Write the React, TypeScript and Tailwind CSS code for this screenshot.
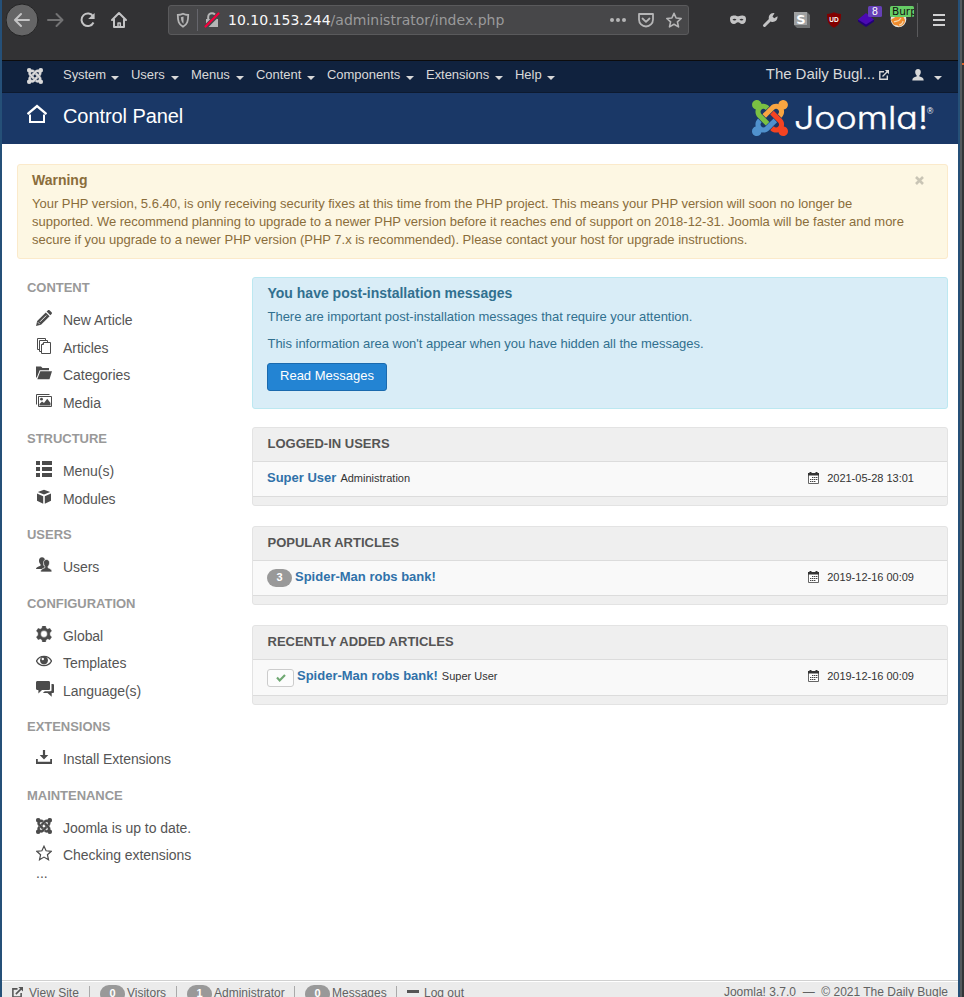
import React from "react";

type Kids = { children?: React.ReactNode };

const joomlaArms = [
  ["#7ac143", "M.6 92.1C.6 58.8 27.4 32 60.4 32c30 0 54.5 21.9 59.2 50.2 32.6-7.6 67.1.6 96.5 30l-44.3 44.3c-20.5-20.5-42.6-16.3-55.4-3.5-14.3 14.3-14.3 37.9 0 52.2l99.5 99.5-44 44.3c-87.7-87.2-49.7-49.7-99.8-99.7-26.8-26.5-35-64.8-24.8-98.9C20.4 144.6.6 120.7.6 92.1z"],
  ["#f9a541", "M130.1 208.5l44.3 44.3c10-10 89.7-89.7 99.7-99.8 14.3-14.3 37.6-14.3 51.9 0 12.8 12.8 17 35-3.5 55.4l44 44.3c31.2-31.2 38.5-67.6 28.9-101.2 29.2-4.1 51.9-29.2 51.9-59.5 0-33.2-26.8-60.1-59.8-60.1-30.3 0-55.4 22.5-59.5 51.6-33.8-9.9-71.7-1.5-98.3 25.1-18.3 19.1-71.1 71.5-99.6 99.9z"],
  ["#f44321", "M396.4 360.7c8.2-32.7-.9-68.5-26.3-93.9-11.8-12.2 5 4.7-99.5-99.7l-44.3 44.3 99.7 99.7c14.3 14.3 14.3 37.6 0 51.9-12.8 12.8-35 17-55.4-3.5l-44 44.3c27.6 30.2 68 38.8 102.7 28 5.5 27.4 29.7 48.1 58.9 48.1 33 0 59.8-26.8 59.8-60.1 0-30.2-22.5-55-51.6-59.1z"],
  ["#5091cd", "M312.1 307.6l-44-44.3c-87 86.4-50.4 50.4-99.7 99.8-14.3 14.3-37.6 14.3-51.9 0-13.1-13.4-16.9-35.3 3.2-55.4l-44-44.3c-30.2 30.2-38 65.2-29.5 98.3-26.7 6-46.2 29.9-46.2 58.2C0 453.2 26.8 480 59.8 480c28.6 0 52.5-19.8 58.6-46.7 32.7 8.2 68.5-.6 94.2-26 32.1-32 12.2-12.4 99.5-99.7z"],
];

function JoomlaMark({ size, color }: { size: number; color?: string }) {
  return (
    <svg width={size} height={size} viewBox="0 32 448 448" className="block shrink-0">
      {joomlaArms.map(([c, d]) => (
        <path key={c} d={d} fill={color ?? c} stroke={color ?? "none"} strokeWidth="12" />
      ))}
    </svg>
  );
}

function Ico({ children, w = 16 }: Kids & { w?: number }) {
  return (
    <svg width={w} height={16} viewBox={`0 0 ${w} 16`} fill="#4b4b4b" className="block shrink-0">
      {children}
    </svg>
  );
}

const icons = {
  pencil: (
    <Ico>
      <path d="M0 16l1.200-5L9.800 2.400l3.800 3.800L5 14.800z" />
      <path d="M10.600 1.600L12 .3c.6-.5 1.300-.4 1.800.1l1.800 1.800c.5.5.5 1.200 0 1.700l-1.300 1.400z" />
      <path d="M4 11.800l6.300-6.300" stroke="#fff" strokeWidth=".9" fill="none" />
      <path d="M1.800 12.200l2 2" stroke="#fff" strokeWidth=".7" fill="none" />
    </Ico>
  ),
  copy: (
    <Ico>
      <g fill="#fff" stroke="#4b4b4b">
        <path d="M1.500 11.500v-11h8v11z" />
        <path d="M3.500 13.500v-11h8v11z" />
        <path d="M7.500 4.500h7v11h-9v-9z" />
        <path d="M5.500 6.500h2v-2" />
      </g>
    </Ico>
  ),
  folder: (
    <Ico>
      <path d="M0 1.500h5l1.500 1.500H13v2.200H3.700L.8 12.500H0z" />
      <path d="M4.300 6.200H16L13.500 14.300H1.300z" />
    </Ico>
  ),
  media: (
    <Ico>
      <path d="M.5 11.500v-10h13" fill="none" stroke="#4b4b4b" />
      <path d="M2.500 3.500h13v10h-13z" fill="#fff" stroke="#4b4b4b" />
      <circle cx="5.500" cy="6.200" r="1.400" />
      <path d="M3.500 12.500V11l2.500-2.500 2 1.500 3.200-4.300 3.300 4.300v2.500z" />
    </Ico>
  ),
  list: (
    <Ico>
      <path d="M0 0h4v4H0zM6 0h10v4H6zM0 6h4v4H0zM6 6h10v4H6zM0 12h4v4H0zM6 12h10v4H6z" />
    </Ico>
  ),
  cube: (
    <Ico>
      <path d="M8 .8l6.200 2.300L8 5.600 1.800 3.100zM1 4.500l6.200 2.700v7.600L1 11.800zM15 4.500L8.800 7.200v7.600l6.200-3z" />
    </Ico>
  ),
  users: (
    <Ico>
      <path d="M6 .3c2 0 3 1.400 3 3.200 0 1.700-.5 2.800-1.400 3.700v1.400l4 1.800v1.600H0c0-1.600 1.600-2.200 4.500-3.200V7.300C3.600 6.500 3 5.300 3 3.500 3 1.700 4 .3 6 .3z" />
      <path d="M10.500 2.500c2 0 3 1.400 3 3.200 0 1.700-.6 2.700-1.400 3.600v1.500c2.400.8 3.900 1.600 3.900 4.200H4.500c.1-2.500 1.700-3.400 4.300-4.200V9.400c-.8-.8-1.300-2-1.300-3.700 0-1.800 1-3.200 3-3.200z" stroke="#fff" strokeWidth=".7" />
    </Ico>
  ),
  gear: (
    <Ico>
      <path fillRule="evenodd" stroke="#4b4b4b" strokeWidth=".5" d="M6.500 0h3l.5 2.200 1.700 1 2.200-.8 1.600 2.700-1.700 1.600v2.600l1.700 1.600-1.600 2.700-2.200-.8-1.700 1-.5 2.200h-3L6 13.800l-1.700-1-2.200.8L.5 10.900l1.700-1.600V6.700L.5 5.100l1.600-2.700 2.200.8 1.700-1zM8 4.600a3.400 3.400 0 100 6.800 3.400 3.400 0 000-6.800z" />
    </Ico>
  ),
  eye: (
    <Ico>
      <path d="M.5 8C3.500 1.700 12.500 1.700 15.500 8 12.500 14 3.500 14 .5 8z" fill="#fff" stroke="#4b4b4b" strokeWidth="1.300" />
      <circle cx="8" cy="7.300" r="3.900" />
      <circle cx="6.800" cy="6" r="1.200" fill="#fff" />
    </Ico>
  ),
  comments: (
    <Ico w={18}>
      <path d="M1.500 0h11C13.500 0 14 .6 14 1.500v6c0 1-.5 1.500-1.500 1.500H6l-3.600 3.500V9h-.9C.5 9 0 8.400 0 7.500v-6C0 .6.5 0 1.500 0z" />
      <path d="M15.500 3h1.200c.9 0 1.300.5 1.300 1.300v6.400c0 .9-.4 1.300-1.300 1.300h-1v3.800L11.500 12H6.800l2-1.800h5.500c.8 0 1.200-.4 1.200-1.200z" />
    </Ico>
  ),
  download: (
    <Ico>
      <path d="M6.900 1h2.200v5h3.200L8 10.600 3.700 6h3.200zM0 10h1.800v2.800h12.400V10H16v5H0z" />
    </Ico>
  ),
  joomla: <JoomlaMark size={16} color="#4b4b4b" />,
  star: (
    <Ico>
      <path d="M8 1.200l2.100 4.600 5.100.5-3.800 3.400 1.100 5L8 12.100l-4.500 2.600 1.100-5L.8 6.300l5.100-.5z" fill="none" stroke="#4b4b4b" strokeWidth="1.200" />
    </Ico>
  ),
};

const groups: { title: string; items: [React.ReactNode, string][] }[] = [
  { title: "CONTENT", items: [[icons.pencil, "New Article"], [icons.copy, "Articles"], [icons.folder, "Categories"], [icons.media, "Media"]] },
  { title: "STRUCTURE", items: [[icons.list, "Menu(s)"], [icons.cube, "Modules"]] },
  { title: "USERS", items: [[icons.users, "Users"]] },
  { title: "CONFIGURATION", items: [[icons.gear, "Global"], [icons.eye, "Templates"], [icons.comments, "Language(s)"]] },
  { title: "EXTENSIONS", items: [[icons.download, "Install Extensions"]] },
  { title: "MAINTENANCE", items: [[icons.joomla, "Joomla is up to date."], [icons.star, "Checking extensions"]] },
];

function Caret() {
  return <span className="mt-[2px] h-0 w-0 border-x-4 border-t-4 border-x-transparent border-t-[#d9d9d9]" />;
}

function External({ color, size = 10 }: { color: string; size?: number }) {
  return (
    <svg width={size} height={size} viewBox="0 0 10 10" fill="none" stroke={color} strokeWidth="1.400" className="block shrink-0">
      <path d="M5 1.700H.8v7.500h7.500V5.500M3.500 6.500L8.500 1.500" />
      <path d="M5.800 0H10v4.200z" fill={color} stroke="none" />
    </svg>
  );
}

function BrowserBar() {
  return (
    <div className="flex h-[61px] items-start border-b border-[#0c0c0d] bg-[#323234] pl-1">
      <svg width="162" height="40" viewBox="6 0 162 40" fill="none" stroke="#c4c4c5" strokeWidth="2" strokeLinecap="round" strokeLinejoin="round" className="block shrink-0">
        <circle cx="22" cy="20" r="16" fill="#656566" stroke="#242425" strokeWidth="1" />
        <path d="M29 20H15.500M21 14l-6 6 6 6" />
        <path d="M48 20h14M56.500 14l6 6-6 6" stroke="#727273" />
        <path d="M93.200 16.500a6.300 6.300 0 10.300 6" strokeLinecap="butt" />
        <path d="M94.600 13v6h-6.500z" fill="#c4c4c5" stroke="none" />
        <path d="M112 20l7-7 7 7M114 19.500V27h10v-7.500" />
        <path d="M118 27v-4h2.300v4" strokeWidth="1.500" />
      </svg>
      <div className="mt-[5px] flex h-[30px] w-[521px] shrink-0 items-center rounded-[3px] border border-[#5a5a5c] bg-[#474749]">
        <svg width="55" height="28" viewBox="169 6 55 28" fill="none" className="block shrink-0">
          <path d="M183 13.800c1.800.9 3.400 1.200 5.200 1.200 0 6-.8 9.500-5.200 11.700-4.400-2.200-5.200-5.700-5.200-11.700 1.800 0 3.400-.3 5.200-1.200z" stroke="#b5b5b6" strokeWidth="1.800" />
          <path d="M183.500 16.500v7.200c-1.900-1.500-2.500-3.500-2.600-6.400z" fill="#b5b5b6" />
          <path d="M197.500 9v22" stroke="#66666c" />
          <path d="M206 19h12v8h-12z" fill="#b5b5b6" />
          <path d="M208.200 19v-2a3.800 3.800 0 017.600 0v2" stroke="#b5b5b6" strokeWidth="2" />
          <path d="M205 27.500l14-14" stroke="#474749" strokeWidth="4.500" />
          <path d="M205.500 26.500l13-13" stroke="#f5003d" strokeWidth="2.200" strokeLinecap="round" />
        </svg>
        <div className="ml-[4px] whitespace-nowrap font-['DejaVu_Sans',sans-serif] text-[14px] leading-none tracking-[0.01px] text-[#f9f9fa]">
          10.10.153.244<span className="text-[#9a9a9b]">/administrator/index.php</span>
        </div>
        <svg width="82" height="28" viewBox="606 6 82 28" fill="none" stroke="#b5b5b6" strokeWidth="1.800" strokeLinejoin="round" strokeLinecap="round" className="ml-auto block shrink-0">
          <g fill="#b5b5b6" stroke="none">
            <circle cx="612" cy="20" r="2" />
            <circle cx="618" cy="20" r="2" />
            <circle cx="624" cy="20" r="2" />
          </g>
          <path d="M639 14h14v5.500a7 7 0 01-14 0zM642.500 18.500l3.500 3.300 3.500-3.300" />
          <path d="M674 13.300l2.100 4.700 5.100.5-3.800 3.400 1.100 5-4.500-2.600-4.500 2.600 1.100-5-3.800-3.400 5.100-.5z" strokeWidth="1.600" />
        </svg>
      </div>
      <svg width="269" height="44" viewBox="689 0 269 44" className="block shrink-0">
        <path fillRule="evenodd" fill="#c4c4c5" d="M730 19c0-3 2-3.500 4-3.500 2.500 0 3 .8 4 .8s1.500-.8 4-.8c2 0 4 .5 4 3.500 0 3.500-1.500 5-4 5-2 0-2.500-1.700-4-1.700s-2 1.700-4 1.700c-2.500 0-4-1.500-4-5zm2.500.7c1 1 3 1 4 0-1-1.200-3-1.200-4 0zm7 0c1 1 3 1 4 0-1-1.200-3-1.200-4 0z" />
        <path d="M764.500 25.500l6.500-6.500" stroke="#c4c4c5" strokeWidth="3" strokeLinecap="round" />
        <path d="M769 19.500c-1-3.500 1.500-7 5.500-6.300l-2 3.200 1.700 1.800 3.300-1.900c.5 4-3 6.500-6.300 5.500z" fill="#c4c4c5" />
        <path d="M807 12l3 3v13h-13l-3-3z" fill="#6d6f70" />
        <path d="M794 12h13v13h-13z" fill="#a0a2a3" />
        <text x="801" y="23.500" textAnchor="middle" fill="#fff" fontSize="13" className="font-['DejaVu_Sans',sans-serif] font-bold">S</text>
        <path d="M834 12.300c2.500 1.300 4.500 1.700 7 1.700 0 7-1 10.500-7 13.700-6-3.200-7-6.700-7-13.700 2.500 0 4.500-.4 7-1.700z" fill="#800000" />
        <text x="834" y="22" textAnchor="middle" fill="#fff" fontSize="6.500" className="font-['Liberation_Sans',sans-serif] font-bold">UD</text>
        <path d="M858 21.500l8 5.500 8-5.500v-2h-16z" fill="#230079" />
        <path d="M858 19.500l8-6.500 8 6.500-8 5z" fill="#4b09b3" />
        <rect x="868" y="6" width="14" height="11" rx="1.500" fill="#6640b7" />
        <text x="875" y="15.300" textAnchor="middle" fill="#fff" fontSize="10.500" className="font-['Liberation_Sans',sans-serif]">8</text>
        <circle cx="898.500" cy="19.500" r="7.800" fill="#e8e2da" />
        <path d="M891 20c1-2 3-1 4-3l8-1 2 4c0 4-3 6-6 6.500-2-2-4-1-5.500-2z" fill="#ef8b2c" />
        <path d="M894 22c2-1 5 0 7-4M899 25c2 0 4-2 4-4" fill="none" stroke="#f5d6ad" strokeWidth="1.200" />
        <rect x="890" y="6" width="24" height="11" rx="1.500" fill="#66cc66" />
        <svg x="890" y="4" width="24" height="16" viewBox="890 4 24 16">
          <text x="892" y="15" fill="#111" fontSize="10.500" className="font-['DejaVu_Sans',sans-serif]">Burp</text>
        </svg>
        <path d="M917.500 3v34" stroke="#5a5a5c" />
        <path d="M933 15h12M933 20h12M933 25h12" stroke="#d0d0d1" strokeWidth="2" />
      </svg>
    </div>
  );
}

const menus = [
  ["System", "w-[56px]"],
  ["Users", "w-[48px]"],
  ["Menus", "w-[53px]"],
  ["Content", "w-[59px]"],
  ["Components", "w-[87px]"],
  ["Extensions", "w-[77px]"],
  ["Help", "w-[40px]"],
];

function AdminNav() {
  return (
    <div className="flex h-8 items-center border-b border-[#0d1a2f] bg-[#10223e] pl-[25px] text-[13px] text-[#d9d9d9]">
      <div className="mt-[-2px]">
        <JoomlaMark size={16} color="#d9d9d9" />
      </div>
      <div className="ml-5 flex gap-3">
        {menus.map(([m, w]) => (
          <div key={m} className={`flex items-center justify-between ${w}`}>
            <span className="-mt-1 tracking-[-0.04px]">{m}</span>
            <Caret />
          </div>
        ))}
      </div>
      <span className="-mt-1 ml-auto text-[15px] tracking-[-0.05px]">The Daily Bugl...</span>
      <div className="-mt-1 ml-1">
        <External color="#d9d9d9" />
      </div>
      <svg width="12" height="12" viewBox="0 0 12 12" fill="#d9d9d9" className="-mt-1 ml-[23px] block">
        <path d="M6 0c2 0 2.800 1.400 2.800 3 0 1.500-.6 2.600-1.400 3.300v1.300C10 8.300 11.700 9 11.700 11.500H.3C.3 9 2 8.300 4.600 7.600V6.300C3.800 5.600 3.200 4.500 3.200 3 3.200 1.400 4 0 6 0z" />
      </svg>
      <div className="ml-[10px] mr-4 flex">
        <Caret />
      </div>
    </div>
  );
}

function PageHeader() {
  return (
    <div className="flex h-[51px] items-start bg-[#1a3867] pl-[25px] text-white">
      <svg width="20" height="20" viewBox="0 0 20 20" fill="none" stroke="#fff" strokeWidth="2" className="mt-[11px] block">
        <path d="M.5 10L10 2l9.500 8" strokeWidth="2.300" />
        <path d="M3 10.500V18h14v-7.500" />
      </svg>
      <h1 className="ml-4 mt-[8px] text-[20px] leading-[30px] tracking-[-0.08px]">Control Panel</h1>
      <div className="ml-auto mr-[24px] mt-[7px] flex">
        <JoomlaMark size={36} />
        <svg width="146" height="36" viewBox="788 100 146 36" fill="#fff" className="block">
          <text x="794" y="129" fontSize="30.500" textLength="134" lengthAdjust="spacingAndGlyphs" stroke="#fff" strokeWidth=".4" className="font-['Inter',sans-serif] font-light [font-feature-settings:'cv11']">Joomla!</text>
          <text x="927" y="113.500" fontSize="8.500" className="font-['Liberation_Sans',sans-serif]">®</text>
        </svg>
      </div>
    </div>
  );
}

function Calendar() {
  return (
    <svg width="11" height="12" viewBox="0 0 11 12" className="block">
      <path d="M.5 1.500h10v10H.5z" fill="#fff" stroke="#666" />
      <path d="M0 1h11v2.500H0zM1.500 0h2v2h-2zM7.500 0h2v2h-2z" fill="#333" />
      <path d="M4 5.500h5.500M2 7.500h7.500M2 9.500h5.500" stroke="#444" strokeWidth="1.200" strokeDasharray="1.400 .6" />
    </svg>
  );
}

function Panel({ title, date, tall, children }: Kids & { title: string; date: string; tall?: boolean }) {
  return (
    <section className="mb-5 overflow-hidden rounded-[3px] border border-[#e3e3e3] bg-[#efefef]">
      <h2 className="h-[33px] pl-[14.500px] text-[13px] font-bold leading-[32px] text-[#555]">{title}</h2>
      <div className={`flex border-y border-[#dcdcdc] bg-[#f9f9f9] pl-[14px] pr-[33px] ${tall ? "h-[37px]" : "h-[36px]"}`}>
        <div className="flex h-[32px] items-center text-[11px] text-[#333]">{children}</div>
        <div className="ml-auto flex h-[33px] items-center text-[11px] text-[#333]">
          <div className="-mt-[2px] mr-[8.500px]">
            <Calendar />
          </div>
          {date}
        </div>
      </div>
      <div className="h-[8px]" />
    </section>
  );
}

function ItemLink({ children }: Kids) {
  return <a className="-mt-px mr-1 text-[13px] font-bold text-[#3071a9]">{children}</a>;
}

function Count({ children }: Kids) {
  return <span className="mr-[3px] h-[18px] w-[25px] shrink-0 rounded-full bg-[#999] text-center text-[11px] font-bold leading-[16px] text-white">{children}</span>;
}

function StatusBar() {
  return (
    <footer className="flex h-[17px] shrink-0 items-start overflow-hidden border-t border-[#d0d0d0] bg-[#ebebeb] pl-[10px] pr-[10px] text-[12px] leading-[14px] text-[#626262] shadow-[inset_0_1px_0_#fff]">
      <div className="mt-[6px]"><External color="#555" size={11} /></div>
      <span className="ml-[6px] mt-[5px] w-[60px] whitespace-nowrap">View Site</span>
      <span className="mt-[5px] h-3 w-px bg-[#aaa]" />
      <div className="ml-[10px] mt-[4px] flex w-[76px]"><Count>0</Count><span className="-ml-px mt-px">Visitors</span></div>
      <span className="mt-[5px] h-3 w-px bg-[#aaa]" />
      <div className="ml-[10px] mt-[4px] flex w-[107px]"><Count>1</Count><span className="-ml-px mt-px">Administrator</span></div>
      <span className="mt-[5px] h-3 w-px bg-[#aaa]" />
      <div className="ml-[10px] mt-[4px] flex w-[91px]"><Count>0</Count><span className="-ml-px mt-px">Messages</span></div>
      <span className="mt-[5px] h-3 w-px bg-[#aaa]" />
      <span className="ml-[10px] mt-[9px] h-[3px] w-3 bg-[#555]" />
      <span className="ml-[5px] mt-[5px] whitespace-nowrap">Log out</span>
      <span className="ml-auto mt-[4px] whitespace-pre">Joomla! 3.7.0  —  © 2021 The Daily Bugle</span>
    </footer>
  );
}

export default function App() {
  return (
    <div className="flex h-[997px] w-[964px] overflow-hidden bg-[#323436] font-['Liberation_Sans',Arial,sans-serif]">
      <div className="w-[2px] shrink-0 bg-[#255078]" />
      <div className="flex w-[956px] shrink-0 flex-col bg-white">
        <BrowserBar />
        <AdminNav />
        <PageHeader />
        <div className="ml-[15px] mr-[10px] mt-5 flex h-[95px] rounded-[3px] border border-[#fbeacb] bg-[#fdf7e3] pl-[14px] text-[#8a6d3b]">
          <div className="w-[874px] whitespace-nowrap">
            <h4 className="mt-[6px] text-[14px] font-bold leading-[18px]">Warning</h4>
            <p className="mt-[6px] text-[13px] leading-[18px] tracking-[-0.014px]">
              Your PHP version, 5.6.40, is only receiving security fixes at this time from the PHP project. This means your PHP version will soon no longer be
              <br />
              supported. We recommend planning to upgrade to a newer PHP version before it reaches end of support on 2018-12-31. Joomla will be faster and more
              <br />
              secure if you upgrade to a newer PHP version (PHP 7.x is recommended). Please contact your host for upgrade instructions.
            </p>
          </div>
          <svg width="9" height="9" viewBox="0 0 9 9" stroke="#c9c5b5" strokeWidth="2.600" className="ml-[8.500px] mt-[11px] block">
            <path d="M1 1l7 7M8 1L1 8" />
          </svg>
        </div>
        <div className="flex grow">
          <aside className="w-[250px] shrink-0 pl-[25px] pt-[6px]">
            {groups.map((g) => (
              <div key={g.title}>
                <h3 className="h-[41px] pt-[14px] text-[13px] font-bold leading-[18px] tracking-[-0.03px] text-[#999]">{g.title}</h3>
                {g.items.map(([icon, label]) => (
                  <div key={label} className="flex h-[27.500px] items-center pl-[9px]">
                    <div className="mt-[-3px] w-[27px]">{icon}</div>
                    <span className="mt-[2px] whitespace-nowrap text-[14px] tracking-[-0.05px] text-[#555]">{label}</span>
                  </div>
                ))}
              </div>
            ))}
            <div className="-mt-[5px] pl-[9px] text-[14px] leading-[18px] text-[#555]">...</div>
          </aside>
          <main className="w-[696px] pt-[18px]">
            <div className="mb-[18px] h-[132px] rounded-[3px] border border-[#bce8f1] bg-[#d9edf7] pl-[14px] text-[13px] text-[#31708f]">
              <h4 className="ml-[0.500px] mt-[6px] text-[14px] font-bold leading-[18px]">You have post-installation messages</h4>
              <p className="ml-[0.500px] mt-[6px] leading-[18px] tracking-[-0.02px]">There are important post-installation messages that require your attention.</p>
              <p className="ml-[0.500px] mt-[9px] leading-[18px] tracking-[-0.03px]">This information area won't appear when you have hidden all the messages.</p>
              <button className="mt-[10px] block h-[28px] w-[120px] rounded-[3px] border border-[#1a6aae] bg-[#2384d3] pb-[2px] text-[13px] leading-[24px] text-white">Read Messages</button>
            </div>
            <Panel title="LOGGED-IN USERS" date="2021-05-28 13:01">
              <ItemLink>Super User</ItemLink>
              <span className="mt-px">Administration</span>
            </Panel>
            <Panel title="POPULAR ARTICLES" date="2019-12-16 00:09">
              <div className="mt-px flex">
                <Count>3</Count>
              </div>
              <ItemLink>Spider-Man robs bank!</ItemLink>
            </Panel>
            <Panel title="RECENTLY ADDED ARTICLES" date="2019-12-16 00:09" tall>
              <span className="mr-[3px] mt-[3px] flex h-[18px] w-[27px] items-center justify-center rounded-[3px] border border-[#ccc] bg-[#fcfcfc]">
                <svg width="10" height="8" viewBox="0 0 11 9" fill="none" stroke="#6fa872" strokeWidth="2.400" className="block">
                  <path d="M1 4l3 3.200L10 1" />
                </svg>
              </span>
              <ItemLink>Spider-Man robs bank!</ItemLink>
              <span className="mt-px">Super User</span>
            </Panel>
          </main>
        </div>
        <StatusBar />
      </div>
      <div className="w-[2px] shrink-0 bg-[#255078]" />
      <div className="w-[2px] shrink-0 bg-[#55595c]" />
      <div className="w-[2px] shrink-0 bg-[#323436] pt-[63px]">
        <div className="h-[2px] bg-[#d9622b]" />
      </div>
    </div>
  );
}
